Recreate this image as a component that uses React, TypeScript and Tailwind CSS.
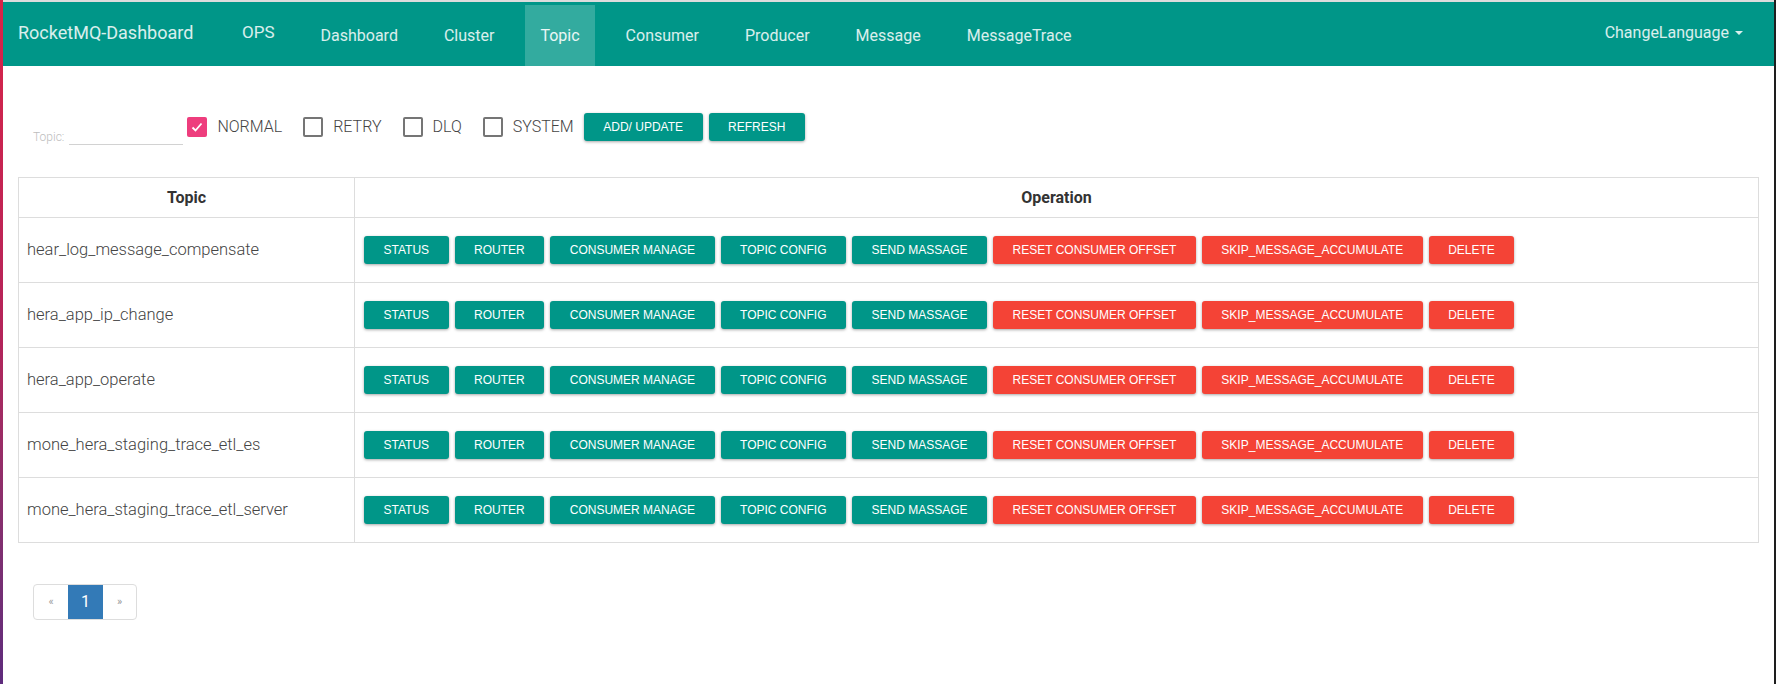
import { useState } from "react";

const navItems = ["Dashboard", "Cluster", "Topic", "Consumer", "Producer", "Message", "MessageTrace"];

const topics = [
    "hear_log_message_compensate",
    "hera_app_ip_change",
    "hera_app_operate",
    "mone_hera_staging_trace_etl_es",
    "mone_hera_staging_trace_etl_server",
];

const okActions = ["STATUS", "ROUTER", "CONSUMER MANAGE", "TOPIC CONFIG", "SEND MASSAGE"];
const dangerActions = ["RESET CONSUMER OFFSET", "SKIP_MESSAGE_ACCUMULATE", "DELETE"];

function Btn({ label, danger }: { label: string; danger?: boolean }) {
    return (
        <button
            className={
                "h-[28px] px-[19.5px] rounded-[3px] font-['Liberation_Sans',Arial,sans-serif] text-[12px] font-normal uppercase text-white leading-none whitespace-nowrap shadow-[0_1px_3px_rgba(0,0,0,0.35)] " +
                (danger ? "bg-[#f44336]" : "bg-[#009688]")
            }
        >
            {label}
        </button>
    );
}

function Check({ label, checked, onToggle }: { label: string; checked: boolean; onToggle: () => void }) {
    return (
        <label className="flex items-center cursor-pointer select-none" onClick={onToggle}>
            {checked ? (
                <span className="w-[20px] h-[20px] rounded-[2px] bg-[#ee3d7d] flex items-center justify-center">
                    <svg width="14" height="14" viewBox="0 0 14 14">
                        <polyline points="2.5,7.5 5.5,10.5 11.5,3.5" fill="none" stroke="white" strokeWidth="1.8" />
                    </svg>
                </span>
            ) : (
                <span className="w-[20px] h-[20px] rounded-[2px] border-2 border-[#757575]" />
            )}
            <span className="ml-[10px] text-[16px] font-light text-[#444]">{label}</span>
        </label>
    );
}

export default function App() {
    const [types, setTypes] = useState<Record<string, boolean>>({ NORMAL: true, RETRY: false, DLQ: false, SYSTEM: false });
    const toggle = (k: string) => setTypes((t) => ({ ...t, [k]: !t[k] }));

    return (
        <div className="flex h-[684px] w-full overflow-hidden bg-white font-['Roboto','Helvetica_Neue',Arial,sans-serif]">
            <div className="w-[3px] shrink-0 bg-gradient-to-b from-[#d92347] via-[#b3245a] to-[#5e2b7c]" />
            <div className="flex-1 flex flex-col border-t-2 border-[#dcdcdc]">
                <nav className="h-[64px] bg-[#009688] flex items-stretch text-white/85">
                    <div className="w-[216px] pl-[15px] flex items-center text-[18px] pb-[4px]">RocketMQ-Dashboard</div>
                    <ul className="flex items-stretch">
                        <li className="mx-2 px-[15px] flex items-center text-[17px] pb-[3px]">OPS</li>
                        {navItems.map((n) => (
                            <li
                                key={n}
                                className={
                                    "mx-2 px-[15px] mt-[3px] flex items-center text-[16px] " +
                                    (n === "Topic" ? "bg-white/20 text-white/90" : "")
                                }
                            >
                                {n}
                            </li>
                        ))}
                    </ul>
                    <div className="ml-auto mr-[31px] flex items-center text-[16px] pb-[2px]">
                        ChangeLanguage
                        <span className="ml-[6px] w-0 h-0 border-x-[4px] border-x-transparent border-t-[4px] border-t-white/85" />
                    </div>
                </nav>

                <div className="px-[15px]">
                    <div className="mt-[47px] flex items-center h-[28px] pl-[15px]">
                        <div className="flex items-end mt-[18px] mr-[4px]">
                            <span className="text-[12px] text-[#bdbdbd] font-light leading-none mb-[2px]">Topic:</span>
                            <input className="ml-[5px] w-[114px] h-[18px] border-b border-[#d2d2d2] outline-none text-[12px]" />
                        </div>
                        <div className="flex items-center gap-[21px]">
                            {Object.keys(types).map((k) => (
                                <Check key={k} label={k} checked={types[k]} onToggle={() => toggle(k)} />
                            ))}
                        </div>
                        <div className="flex items-center gap-[6px] ml-[10px]">
                            <Btn label="ADD/ UPDATE" />
                            <Btn label="REFRESH" />
                        </div>
                    </div>

                    <table className="mt-[36px] w-full border-collapse border border-[#dddddd] text-[#333]">
                        <thead>
                            <tr className="h-[40px]">
                                <th className="w-[336px] border border-[#dddddd] text-[16px] font-bold">Topic</th>
                                <th className="border border-[#dddddd] text-[16px] font-bold">Operation</th>
                            </tr>
                        </thead>
                        <tbody>
                            {topics.map((t) => (
                                <tr key={t} className="h-[65px]">
                                    <td className="border border-[#dddddd] px-2 text-[16.5px] font-light text-[#444]">{t}</td>
                                    <td className="border border-[#dddddd] px-[9px]">
                                        <div className="flex items-center gap-[6px]">
                                            {okActions.map((a) => (
                                                <Btn key={a} label={a} />
                                            ))}
                                            {dangerActions.map((a) => (
                                                <Btn key={a} label={a} danger />
                                            ))}
                                        </div>
                                    </td>
                                </tr>
                            ))}
                        </tbody>
                    </table>

                    <div className="mt-[41px] ml-[15px] flex w-fit h-[36px] rounded-[4px] border border-[#dddddd] overflow-hidden">
                        <span className="w-[34px] flex items-center justify-center text-[11px] text-[#999]">«</span>
                        <span className="w-[35px] flex items-center justify-center text-[16px] text-white bg-[#337ab7]">1</span>
                        <span className="w-[33px] flex items-center justify-center text-[11px] text-[#999]">»</span>
                    </div>
                </div>
            </div>
            <div className="w-[2px] shrink-0 bg-[#1e1e1e]" />
        </div>
    );
}
